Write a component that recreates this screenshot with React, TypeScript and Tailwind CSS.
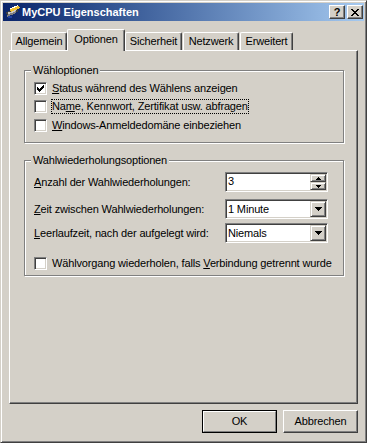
import React from 'react';

const sunken =
  'border border-t-[#808080] border-l-[#808080] border-r-white border-b-white shadow-[inset_1px_1px_#404040,inset_-1px_-1px_#d4d0c8]';
const raised =
  'border border-t-white border-l-white border-r-[#404040] border-b-[#404040] shadow-[inset_-1px_-1px_#808080]';
const scrollBtn =
  'border border-t-[#d4d0c8] border-l-[#d4d0c8] border-r-[#404040] border-b-[#404040] shadow-[inset_1px_1px_#fff,inset_-1px_-1px_#808080]';

function Pixels({ w, h, d, className }: { w: number; h: number; d: string; className?: string }) {
  return (
    <svg width={w} height={h} viewBox={`0 0 ${w} ${h}`} shapeRendering="crispEdges" className={className}>
      <path d={d} fill="#000" />
    </svg>
  );
}

const CHECK =
  'M6 0h1v1h-1z M5 1h2v1h-2z M0 2h1v1h-1z M4 2h3v1h-3z M0 3h2v1h-2z M3 3h3v1h-3z M0 4h5v1h-5z M1 5h3v1h-3z M2 6h1v1h-1z';
const DOWN = 'M0 0h7v1h-7z M1 1h5v1h-5z M2 2h3v1h-3z M3 3h1v1h-1z';
const SPIN_UP = 'M2 0h1v1h-1z M1 1h3v1h-3z M0 2h5v1h-5z';
const SPIN_DOWN = 'M0 0h5v1h-5z M1 1h3v1h-3z M2 2h1v1h-1z';
const CLOSE_X =
  'M0 0h2v1h-2z M6 0h2v1h-2z M1 1h2v1h-2z M5 1h2v1h-2z M2 2h4v1h-4z M3 3h2v1h-2z M2 4h4v1h-4z M1 5h2v1h-2z M5 5h2v1h-2z M0 6h2v1h-2z M6 6h2v1h-2z';

function CheckBox({ checked }: { checked?: boolean }) {
  return (
    <span className={`w-[13px] h-[13px] shrink-0 bg-white flex items-center justify-center ${sunken}`}>
      {checked && <Pixels w={7} h={7} d={CHECK} />}
    </span>
  );
}

function CheckRow({ checked, focused, children, className = '' }: { checked?: boolean; focused?: boolean; children: React.ReactNode; className?: string }) {
  return (
    <div className={`flex items-center h-[13px] ml-[9px] ${className}`}>
      <CheckBox checked={checked} />
      <span
        className={`ml-[5px] leading-[13px] whitespace-nowrap ${focused ? 'outline outline-1 outline-dotted outline-black' : ''}`}
      >
        {children}
      </span>
    </div>
  );
}

function Group({ title, children, className = '' }: { title: string; children: React.ReactNode; className?: string }) {
  return (
    <div className={`border border-[#808080] shadow-[inset_1px_1px_#fff,1px_1px_#fff] flex flex-col ${className}`}>
      <span className="-mt-[7px] ml-[6px] px-[2px] w-fit bg-[#d4d0c8] leading-[13px] whitespace-nowrap">{title}</span>
      {children}
    </div>
  );
}

function Combo({ value }: { value: string }) {
  return (
    <div className={`w-[103px] h-[20px] bg-white p-[1px] flex ${sunken}`}>
      <span className="flex-1 pl-[1px] leading-[16px]">{value}</span>
      <span className={`w-[16px] h-[16px] bg-[#d4d0c8] flex items-center justify-center ${scrollBtn}`}>
        <Pixels w={7} h={4} d={DOWN} />
      </span>
    </div>
  );
}

function Spin({ value }: { value: string }) {
  return (
    <div className={`w-[103px] h-[20px] bg-white p-[1px] flex ${sunken}`}>
      <span className="flex-1 pl-[1px] leading-[14px]">{value}</span>
      <div className="w-[16px] h-[16px] flex flex-col">
        <span className={`h-[8px] bg-[#d4d0c8] flex items-center justify-center ${scrollBtn}`}>
          <Pixels w={5} h={3} d={SPIN_UP} />
        </span>
        <span className={`h-[8px] bg-[#d4d0c8] flex items-center justify-center ${scrollBtn}`}>
          <Pixels w={5} h={3} d={SPIN_DOWN} />
        </span>
      </div>
    </div>
  );
}

function FieldRow({ label, children, className = '' }: { label: React.ReactNode; children: React.ReactNode; className?: string }) {
  return (
    <div className={`flex items-center ml-[9px] ${className}`}>
      <span className="w-[191px] whitespace-nowrap leading-[13px]">{label}</span>
      {children}
    </div>
  );
}

function TitleIcon() {
  return (
    <svg width="16" height="16" viewBox="0 0 16 16" shapeRendering="crispEdges">
      <path d="M1 9l9-4 3 2-9 4z" fill="#c8c8c8" stroke="#404040" strokeWidth="1" />
      <path d="M2 11l9-4 0 2-9 4z" fill="#808080" />
      <path d="M4 6l9-4 2 2-9 4z" fill="#f0c030" />
      <path d="M5 5l8-3.5" stroke="#ffffff" strokeWidth="1" />
      <path d="M3 12h4v2h-4z" fill="#2040a0" />
    </svg>
  );
}

function TitleBar() {
  return (
    <div className="h-[18px] shrink-0 flex items-center bg-linear-to-r from-[#0a246a] to-[#a6caf0] pl-[2px] pr-[1px] tracking-normal">
      <TitleIcon />
      <span className="ml-[1px] text-white font-bold text-[11px] leading-[18px] whitespace-nowrap">MyCPU Eigenschaften</span>
      <div className="ml-auto flex gap-[2px]">
        <span className={`w-[16px] h-[14px] bg-[#d4d0c8] flex items-center justify-center font-bold text-[11px] leading-none ${raised}`}>
          ?
        </span>
        <span className={`w-[16px] h-[14px] bg-[#d4d0c8] flex items-center justify-center ${raised}`}>
          <Pixels w={8} h={7} d={CLOSE_X} />
        </span>
      </div>
    </div>
  );
}

function Tab({ label, w, className = '' }: { label: string; w: string; className?: string }) {
  return (
    <div
      className={`${w} h-[18px] border-t border-l border-white border-r border-r-[#404040] rounded-tl-[2px] rounded-tr-[2px] shadow-[inset_-1px_0_#808080] flex items-center justify-center whitespace-nowrap ${className}`}
    >
      {label}
    </div>
  );
}

export default function App() {
  return (
    <div className="w-[367px] h-[443px] bg-[#d4d0c8] border border-t-[#d4d0c8] border-l-[#d4d0c8] border-r-[#404040] border-b-[#404040] shadow-[inset_1px_1px_#fff,inset_-1px_-1px_#808080] p-[2px] flex flex-col text-[11px] tracking-[-0.15px] text-black font-['Liberation_Sans',Arial,sans-serif]">
      <TitleBar />

      <div className="mt-[8px] mx-[6px] flex flex-col">
        {/* Tabs */}
        <div className="h-[21px] flex items-end">
          <Tab label="Allgemein" w="w-[56px]" className="ml-[2px]" />
          <div className="w-[58px] h-[22px] -mb-px relative z-10 bg-[#d4d0c8] border-t border-l border-white border-r border-r-[#404040] rounded-tl-[2px] rounded-tr-[2px] shadow-[inset_-1px_0_#808080] flex items-center justify-center pb-[2px]">
            Optionen
          </div>
          <Tab label="Sicherheit" w="w-[57px]" />
          <Tab label="Netzwerk" w="w-[56px]" className="ml-[1px]" />
          <Tab label="Erweitert" w="w-[53px]" className="ml-[1px]" />
        </div>

        {/* Panel */}
        <div className={`h-[354px] pt-[19px] pl-[14px] pr-[13px] flex flex-col ${raised}`}>
          <Group title="Wähloptionen" className="h-[73px]">
            <CheckRow checked className="mt-[5px]">
              <u>S</u>tatus während des Wählens anzeigen
            </CheckRow>
            <CheckRow focused className="mt-[5px]">
              Na<u>m</u>e, Kennwort, Zertifikat usw. abfragen
            </CheckRow>
            <CheckRow className="mt-[6px]">
              <u>W</u>indows-Anmeldedomäne einbeziehen
            </CheckRow>
          </Group>

          <Group title="Wahlwiederholungsoptionen" className="mt-[17px] h-[116px]">
            <FieldRow label={<><u>A</u>nzahl der Wahlwiederholungen:</>} className="mt-[5px]">
              <Spin value="3" />
            </FieldRow>
            <FieldRow label={<><u>Z</u>eit zwischen Wahlwiederholungen:</>} className="mt-[7px]">
              <Combo value="1 Minute" />
            </FieldRow>
            <FieldRow label={<><u>L</u>eerlaufzeit, nach der aufgelegt wird:</>} className="mt-[4px]">
              <Combo value="Niemals" />
            </FieldRow>
            <CheckRow className="mt-[14px]">
              Wählvorgang wiederholen, falls <u>V</u>erbindung getrennt wurde
            </CheckRow>
          </Group>
        </div>
      </div>

      {/* Buttons */}
      <div className="mt-[6px] mr-[6px] flex justify-end gap-[6px]">
        <div className="w-[75px] h-[23px] border border-black">
          <div className="h-full border border-t-white border-l-white border-r-[#808080] border-b-[#808080] flex items-center justify-center">
            OK
          </div>
        </div>
        <div className={`w-[75px] h-[23px] flex items-center justify-center ${raised}`}>Abbrechen</div>
      </div>
    </div>
  );
}
